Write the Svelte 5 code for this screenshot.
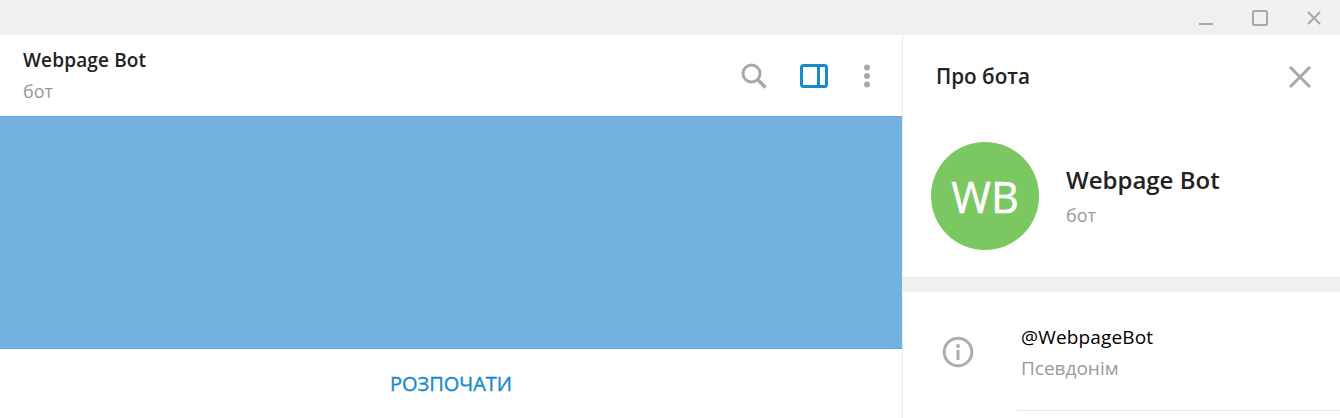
<script lang="ts">
	const name = 'Webpage Bot';
</script>

<div class="window">
	<div class="titlebar">
		<button class="win-btn" aria-label="Minimize">
			<svg width="14" height="16" viewBox="0 0 14 16"><path d="M0 14h14" stroke="#a9a9a9" stroke-width="2" /></svg>
		</button>
		<button class="win-btn" aria-label="Maximize">
			<svg width="16" height="16" viewBox="0 0 16 16"><rect x="1" y="1" width="14" height="14" rx="1.500" fill="none" stroke="#a9a9a9" stroke-width="2" /></svg>
		</button>
		<button class="win-btn" aria-label="Close">
			<svg width="14" height="14" viewBox="0 0 14 14"><path d="M1 1l12 12M13 1L1 13" stroke="#a9a9a9" stroke-width="2" /></svg>
		</button>
	</div>

	<div class="body">
		<main class="chat">
			<header class="chat-head">
				<div class="peer">
					<div class="peer-name">{name}</div>
					<div class="peer-status">бот</div>
				</div>
				<div class="actions">
					<svg width="26" height="26" viewBox="0 0 26 26" aria-label="Search">
						<circle cx="10.500" cy="10.500" r="8.500" fill="none" stroke="#a8a8a8" stroke-width="3" />
						<path d="M16.500 16.500l8 8" stroke="#a8a8a8" stroke-width="3.400" />
					</svg>
					<svg width="28" height="24" viewBox="0 0 28 24" aria-label="Toggle panel">
						<rect x="1.500" y="1.500" width="25" height="21" rx="2" fill="none" stroke="#168acd" stroke-width="3" />
						<path d="M18.500 2v20" stroke="#168acd" stroke-width="3" />
					</svg>
					<svg class="menu" width="8" height="26" viewBox="0 0 8 26" aria-label="Menu">
						<circle cx="4" cy="4.500" r="3" fill="#a8a8a8" />
						<circle cx="4" cy="13" r="3" fill="#a8a8a8" />
						<circle cx="4" cy="21.500" r="3" fill="#a8a8a8" />
					</svg>
				</div>
			</header>
			<div class="history"></div>
			<div class="start">РОЗПОЧАТИ</div>
		</main>

		<aside class="info">
			<header class="info-head">
				<span class="info-title">Про бота</span>
				<svg class="info-close" width="24" height="24" viewBox="0 0 24 24" aria-label="Close panel">
					<path d="M2 2l20 20M22 2L2 22" stroke="#a8a8a8" stroke-width="3" />
				</svg>
			</header>
			<section class="profile">
				<div class="avatar">WB</div>
				<div>
					<div class="profile-name">{name}</div>
					<div class="profile-status">бот</div>
				</div>
			</section>
			<div class="gap"></div>
			<section class="row">
				<svg class="row-icon" width="32" height="32" viewBox="0 0 32 32" aria-hidden="true">
					<circle cx="16" cy="16" r="13.800" fill="none" stroke="#adadad" stroke-width="3" />
					<circle cx="16" cy="10" r="2" fill="#adadad" />
					<rect x="14.500" y="14" width="3" height="10" fill="#adadad" />
				</svg>
				<div class="row-text">
					<div class="row-value">@WebpageBot</div>
					<div class="row-label">Псевдонім</div>
				</div>
			</section>
		</aside>
	</div>
</div>

<style>
	:global(body) {
		margin: 0;
		background: #fff;
	}

	.window {
		width: 1340px;
		height: 418px;
		overflow: hidden;
		display: flex;
		flex-direction: column;
		font-family: 'Open Sans', 'Noto Sans', sans-serif;
		color: #222;
	}

	.titlebar {
		height: 35px;
		flex: none;
		background: #f0f0f0;
		display: flex;
		justify-content: flex-end;
		align-items: center;
		padding-right: 19px;
		gap: 39px;
		box-sizing: border-box;
	}

	.win-btn {
		padding: 0;
		border: 0;
		background: none;
		display: flex;
	}

	.body {
		flex: 1;
		display: flex;
		min-height: 0;
	}

	.chat {
		width: 902px;
		flex: none;
		display: flex;
		flex-direction: column;
		border-right: 1px solid #ececec;
	}

	.chat-head {
		height: 81px;
		flex: none;
		box-sizing: border-box;
		padding: 0 31px 0 23px;
		display: flex;
		justify-content: space-between;
		align-items: center;
	}

	.peer-name {
		font-size: 19px;
		font-weight: 600;
		line-height: 24px;
		letter-spacing: 0.15px;
	}

	.peer-status {
		font-size: 18px;
		line-height: 24px;
		margin-top: 7px;
		color: #999;
	}

	.actions {
		display: flex;
		align-items: center;
		gap: 33px;
	}

	.menu {
		margin-left: 2px;
	}

	.history {
		flex: 1;
		background: #73b2e0;
		border-top: 1px solid #69a8d6;
		border-bottom: 1px solid #69a8d6;
	}

	.start {
		height: 69px;
		flex: none;
		display: flex;
		align-items: center;
		justify-content: center;
		padding-bottom: 1px;
		box-sizing: border-box;
		font-size: 20px;
		-webkit-text-stroke: 0.35px #168acd;
		color: #168acd;
	}

	.info {
		flex: 1;
		min-width: 0;
	}

	.info-head {
		height: 81px;
		box-sizing: border-box;
		padding: 0 28px 0 33px;
		display: flex;
		justify-content: space-between;
		align-items: center;
	}

	.info-title {
		font-size: 20.700px;
		font-weight: 600;
	}

	.info-close {
		margin-top: 2px;
	}

	.profile {
		height: 161px;
		box-sizing: border-box;
		padding: 26px 0 0 28px;
		display: flex;
		gap: 27px;
	}

	.avatar {
		width: 108px;
		height: 108px;
		border-radius: 50%;
		background: #7bc862;
		color: #fff;
		font-size: 43px;
		-webkit-text-stroke: 0.5px #fff;
		display: flex;
		align-items: center;
		justify-content: center;
	}

	.profile-name {
		margin-top: 22px;
		font-size: 24px;
		font-weight: 600;
		line-height: 32px;
	}

	.profile-status {
		margin-top: 7px;
		font-size: 18px;
		line-height: 24px;
		color: #999;
	}

	.gap {
		height: 15px;
		background: #f1f1f1;
		box-shadow: inset 0 2px 1px -1px #e6e6e6;
		box-sizing: border-box;
	}

	.row {
		display: flex;
		padding-left: 39px;
	}

	.row-icon {
		margin-top: 44px;
	}

	.row-text {
		margin-left: 43px;
		flex: 1;
		height: 119px;
		padding: 33px 0 0 4px;
		box-sizing: border-box;
		border-bottom: 1px solid #e8e8e8;
	}

	.row-value {
		font-size: 19px;
		line-height: 24px;
		letter-spacing: 0.15px;
		color: #000;
	}

	.row-label {
		margin-top: 7px;
		font-size: 19px;
		line-height: 24px;
		color: #999;
	}
</style>
